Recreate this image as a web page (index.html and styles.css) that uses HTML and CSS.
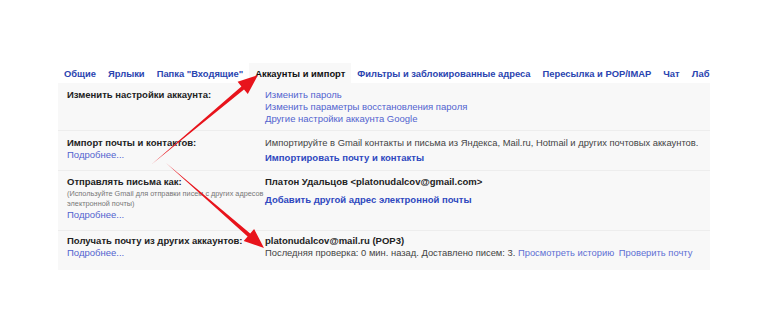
FILE: index.html
```html
<!DOCTYPE html>
<html lang="ru">
<head>
    <meta charset="UTF-8">
    <meta name="viewport" content="width=device-width, initial-scale=1.0">
    <title>Настройки Gmail</title>
    <link rel="stylesheet" href="styles.css">
</head>
<body>
    <div class="settings">
        <nav class="tabs">
            <a class="tab">Общие</a>
            <a class="tab">Ярлыки</a>
            <a class="tab">Папка "Входящие"</a>
            <a class="tab active">Аккаунты и импорт</a>
            <a class="tab">Фильтры и заблокированные адреса</a>
            <a class="tab">Пересылка и POP/IMAP</a>
            <a class="tab">Чат</a>
            <a class="tab">Лаб</a>
        </nav>

        <div class="panel">
            <div class="row row-account">
                <div class="label">
                    <div class="title">Изменить настройки аккаунта:</div>
                </div>
                <div class="value">
                    <a class="link">Изменить пароль</a>
                    <a class="link">Изменить параметры восстановления пароля</a>
                    <a class="link">Другие настройки аккаунта Google</a>
                </div>
            </div>

            <div class="row row-import">
                <div class="label">
                    <div class="title">Импорт почты и контактов:</div>
                    <a class="link">Подробнее...</a>
                </div>
                <div class="value">
                    <div class="text">Импортируйте в Gmail контакты и письма из Яндекса, Mail.ru, Hotmail и других почтовых аккаунтов.</div>
                    <a class="link strong spaced">Импортировать почту и контакты</a>
                </div>
            </div>

            <div class="row row-send">
                <div class="label">
                    <div class="title">Отправлять письма как:</div>
                    <div class="hint">(Используйте Gmail для отправки писем с других адресов электронной почты)</div>
                    <a class="link">Подробнее...</a>
                </div>
                <div class="value">
                    <div class="title">Платон Удальцов &lt;platonudalcov@gmail.com&gt;</div>
                    <a class="link strong spaced-lg">Добавить другой адрес электронной почты</a>
                </div>
            </div>

            <div class="row row-fetch">
                <div class="label">
                    <div class="title">Получать почту из других аккаунтов:</div>
                    <a class="link">Подробнее...</a>
                </div>
                <div class="value">
                    <div class="title">platonudalcov@mail.ru (POP3)</div>
                    <div class="text">Последняя проверка: 0 мин. назад. Доставлено писем: 3. <a class="link inline">Просмотреть историю</a> <a class="link inline gap">Проверить почту</a></div>
                </div>
            </div>
        </div>
    </div>

    <!-- red annotation arrows drawn over the screenshot -->
    <svg class="arrows" width="770" height="330" viewBox="0 0 770 330">
        <polygon points="152,164 241.4,86.4 237.6,81.8 258,75 247.8,94 244,89.4" />
        <polygon points="166,163 250.2,233.4 254.1,228.9 264,248 243.7,240.9 247.6,236.4" />
    </svg>
</body>
</html>
```

FILE: styles.css
```css
* {
    box-sizing: border-box;
}
body {
    margin: 0;
    background: #fff;
    font-family: "Liberation Sans", Arial, sans-serif;
    font-size: 9.5px;
    color: #222;
    position: relative;
    width: 770px;
    height: 330px;
    overflow: hidden;
}
.settings {
    margin: 63px 0 0 58px;
    width: 652px;
}
.tabs {
    display: flex;
    height: 20px;
    overflow: hidden;
    white-space: nowrap;
}
.tab {
    flex: none;
    padding: 0 6px;
    line-height: 21px;
    font-size: 9.4px;
    font-weight: bold;
    color: #2a44b0;
}
.tab.active {
    background: #f8f8f8;
    color: #111;
}
.panel {
    background: #f8f8f8;
}
.row {
    display: flex;
    padding: 6px 0 6px 9px;
    border-bottom: 1px solid #ededed;
    line-height: 12px;
}
.row:last-child {
    border-bottom: none;
}
.row-account {
    height: 48px;
}
.row-import {
    height: 40px;
}
.row-send {
    height: 60px;
    padding-top: 5px;
}
.row-fetch {
    height: 39px;
    padding-top: 4px;
}
.label {
    width: 198px;
    flex: none;
    display: flex;
    flex-direction: column;
}
.value {
    display: flex;
    flex-direction: column;
    white-space: nowrap;
}
.title {
    font-weight: bold;
    color: #222;
}
.text {
    font-size: 9.4px;
    color: #444;
}
.hint {
    font-size: 7.3px;
    line-height: 10px;
    color: #777;
    margin-top: 1px;
}
.link {
    color: #5263cf;
}
.link.strong {
    font-weight: bold;
    color: #2f48bf;
}
.link.inline {
    color: #6070d4;
}
.link.gap {
    margin-left: 2px;
}
.spaced {
    margin-top: 3px;
}
.spaced-lg {
    margin-top: 6px;
}
.arrows {
    position: absolute;
    top: 0;
    left: 0;
    pointer-events: none;
}
.arrows polygon {
    fill: #e8141c;
}
```
